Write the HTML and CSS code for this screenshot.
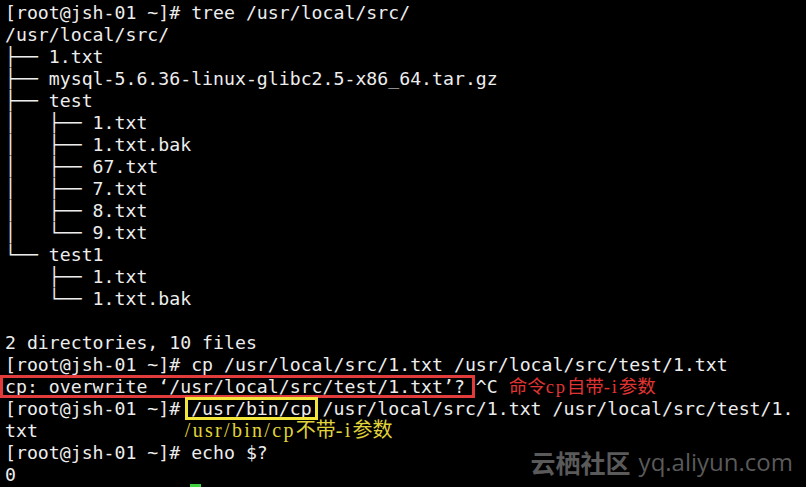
FILE: index.html
```html
<!DOCTYPE html>
<html lang="zh">
<head>
<meta charset="utf-8">
<link rel="stylesheet" href="styles.css">
</head>
<body>
<div class="term">
<div class="out">
<div class="ln">[root@jsh-01 ~]# tree /usr/local/src/</div>
<div class="ln">/usr/local/src/</div>
<div class="ln">├── 1.txt</div>
<div class="ln">├── mysql-5.6.36-linux-glibc2.5-x86_64.tar.gz</div>
<div class="ln">├── test</div>
<div class="ln">│   ├── 1.txt</div>
<div class="ln">│   ├── 1.txt.bak</div>
<div class="ln">│   ├── 67.txt</div>
<div class="ln">│   ├── 7.txt</div>
<div class="ln">│   ├── 8.txt</div>
<div class="ln">│   └── 9.txt</div>
<div class="ln">└── test1</div>
<div class="ln">    ├── 1.txt</div>
<div class="ln">    └── 1.txt.bak</div>
<div class="ln"></div>
<div class="ln">2 directories, 10 files</div>
<div class="ln">[root@jsh-01 ~]# cp /usr/local/src/1.txt /usr/local/src/test/1.txt</div>
<div class="ln"><span class="box red">cp: overwrite ‘/usr/local/src/test/1.txt’?</span> ^C <span class="note note-red">命令<span class="lat">cp</span>自带<span class="lat">-i</span>参数</span></div>
<div class="ln">[root@jsh-01 ~]# <span class="box yellow">/usr/bin/cp</span> /usr/local/src/1.txt /usr/local/src/test/1.</div>
<div class="ln">txt<span class="note note-yellow"><span class="lat">/usr/bin/cp</span>不带<span class="lat">-i</span>参数</span></div>
<div class="ln">[root@jsh-01 ~]# echo $?</div>
<div class="ln">0</div>
</div>
<span class="cursor"></span>
<div class="watermark"><span class="wm-cn">云栖社区</span><span class="wm-en">yq.aliyun.com</span></div>
</div>
</body>
</html>
```
FILE: styles.css
```css
html, body {
  margin: 0;
  padding: 0;
  background: #000;
}
.term {
  position: relative;
  width: 806px;
  height: 487px;
  overflow: hidden;
  background: #000;
}
.out {
  padding: 2px 0 0 5px;
  font-family: "DejaVu Sans Mono", monospace;
  font-size: 18.2px;
  line-height: 22px;
  color: #ededed;
}
.ln {
  height: 22px;
  white-space: pre;
}
.box {
  position: relative;
}
.box::before {
  content: "";
  position: absolute;
  top: -1px;
  bottom: -1px;
  border-style: solid;
  border-width: 3px;
}
.red::before {
  left: -5px;
  right: -10px;
  border-color: #e23b3b;
}
.yellow::before {
  left: -6px;
  right: -6px;
  border-color: #f2e63a;
}
.note {
  font-family: "Liberation Serif", "Noto Sans CJK SC", serif;
  line-height: 20px;
}
.note-red {
  color: #e03434;
  font-size: 18.5px;
}
.note-red .lat {
  letter-spacing: 1.8px;
}
.note-yellow {
  color: #e0d43a;
  font-size: 20px;
  margin-left: 147px;
}
.note-yellow .lat {
  letter-spacing: 2.3px;
}
.cursor {
  position: absolute;
  left: 190px;
  top: 484px;
  width: 11px;
  height: 3px;
  background: #3fcf3f;
}
.watermark {
  position: absolute;
  right: 13px;
  top: 446px;
  display: flex;
  align-items: center;
  gap: 8px;
  color: #5a5a5a;
}
.wm-cn {
  font-family: "Noto Sans CJK SC", sans-serif;
  font-weight: 700;
  font-size: 25px;
  line-height: 32px;
}
.wm-en {
  font-family: "Open Sans", sans-serif;
  font-size: 24px;
  line-height: 32px;
}
```
